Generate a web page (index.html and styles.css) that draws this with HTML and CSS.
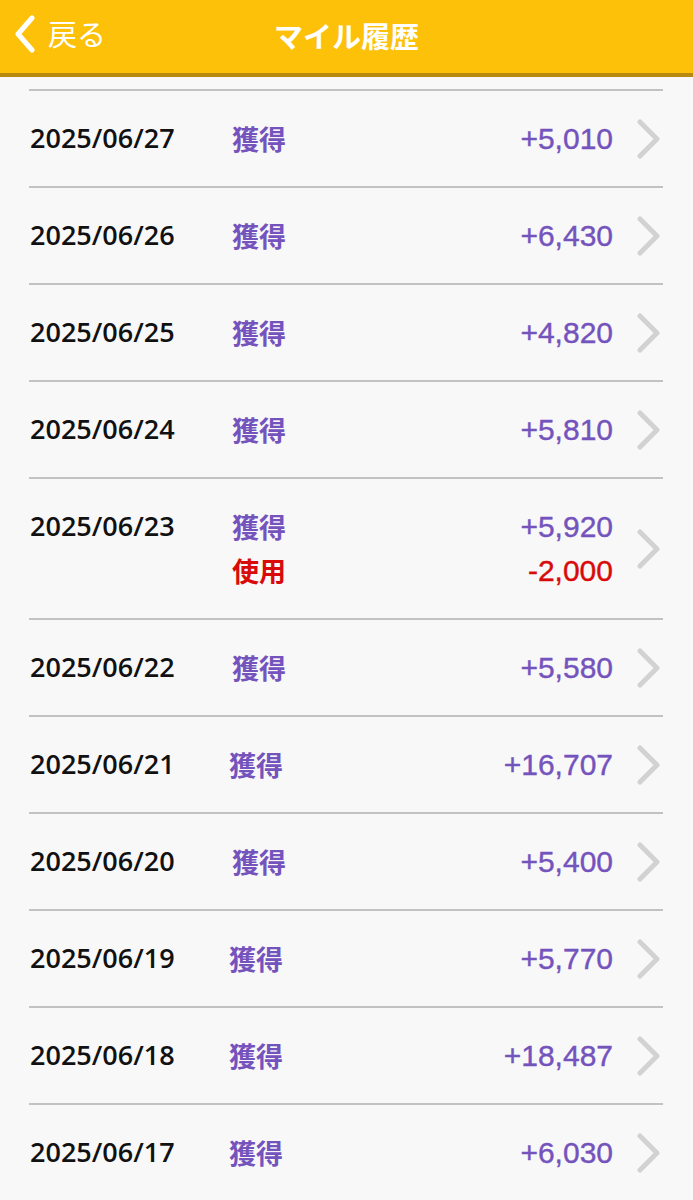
FILE: index.html
```html
<!DOCTYPE html>
<html lang="ja">
<head>
<meta charset="utf-8">
<title>マイル履歴</title>
<link rel="stylesheet" href="styles.css">
</head>
<body>
<header class="nav">
  <div class="back">
    <svg class="back-icon" width="24" height="38" viewBox="0 0 24 38"><path d="M19 3 L5 19 L19 35" fill="none" stroke="#fff" stroke-width="5" stroke-linecap="round" stroke-linejoin="round"/></svg>
    <span class="back-label">戻る</span>
  </div>
  <h1 class="title">マイル履歴</h1>
</header>
<main class="list">
  <div class="row">
    <div class="date">2025/06/27</div>
    <div class="types"><span class="earn">獲得</span></div>
    <div class="amounts"><span class="earn">+5,010</span></div>
    <svg class="chev" width="24" height="40" viewBox="0 0 24 40"><path d="M3 3 L20 20 L3 37" fill="none" stroke="#d2d2d2" stroke-width="5" stroke-linecap="round" stroke-linejoin="round"/></svg>
  </div>
  <div class="row">
    <div class="date">2025/06/26</div>
    <div class="types"><span class="earn">獲得</span></div>
    <div class="amounts"><span class="earn">+6,430</span></div>
    <svg class="chev" width="24" height="40" viewBox="0 0 24 40"><path d="M3 3 L20 20 L3 37" fill="none" stroke="#d2d2d2" stroke-width="5" stroke-linecap="round" stroke-linejoin="round"/></svg>
  </div>
  <div class="row">
    <div class="date">2025/06/25</div>
    <div class="types"><span class="earn">獲得</span></div>
    <div class="amounts"><span class="earn">+4,820</span></div>
    <svg class="chev" width="24" height="40" viewBox="0 0 24 40"><path d="M3 3 L20 20 L3 37" fill="none" stroke="#d2d2d2" stroke-width="5" stroke-linecap="round" stroke-linejoin="round"/></svg>
  </div>
  <div class="row">
    <div class="date">2025/06/24</div>
    <div class="types"><span class="earn">獲得</span></div>
    <div class="amounts"><span class="earn">+5,810</span></div>
    <svg class="chev" width="24" height="40" viewBox="0 0 24 40"><path d="M3 3 L20 20 L3 37" fill="none" stroke="#d2d2d2" stroke-width="5" stroke-linecap="round" stroke-linejoin="round"/></svg>
  </div>
  <div class="row">
    <div class="date">2025/06/23</div>
    <div class="types"><span class="earn">獲得</span><span class="use">使用</span></div>
    <div class="amounts"><span class="earn">+5,920</span><span class="use">-2,000</span></div>
    <svg class="chev" width="24" height="40" viewBox="0 0 24 40"><path d="M3 3 L20 20 L3 37" fill="none" stroke="#d2d2d2" stroke-width="5" stroke-linecap="round" stroke-linejoin="round"/></svg>
  </div>
  <div class="row">
    <div class="date">2025/06/22</div>
    <div class="types"><span class="earn">獲得</span></div>
    <div class="amounts"><span class="earn">+5,580</span></div>
    <svg class="chev" width="24" height="40" viewBox="0 0 24 40"><path d="M3 3 L20 20 L3 37" fill="none" stroke="#d2d2d2" stroke-width="5" stroke-linecap="round" stroke-linejoin="round"/></svg>
  </div>
  <div class="row">
    <div class="date">2025/06/21</div>
    <div class="types shift"><span class="earn">獲得</span></div>
    <div class="amounts"><span class="earn">+16,707</span></div>
    <svg class="chev" width="24" height="40" viewBox="0 0 24 40"><path d="M3 3 L20 20 L3 37" fill="none" stroke="#d2d2d2" stroke-width="5" stroke-linecap="round" stroke-linejoin="round"/></svg>
  </div>
  <div class="row">
    <div class="date">2025/06/20</div>
    <div class="types"><span class="earn">獲得</span></div>
    <div class="amounts"><span class="earn">+5,400</span></div>
    <svg class="chev" width="24" height="40" viewBox="0 0 24 40"><path d="M3 3 L20 20 L3 37" fill="none" stroke="#d2d2d2" stroke-width="5" stroke-linecap="round" stroke-linejoin="round"/></svg>
  </div>
  <div class="row">
    <div class="date">2025/06/19</div>
    <div class="types shift"><span class="earn">獲得</span></div>
    <div class="amounts"><span class="earn">+5,770</span></div>
    <svg class="chev" width="24" height="40" viewBox="0 0 24 40"><path d="M3 3 L20 20 L3 37" fill="none" stroke="#d2d2d2" stroke-width="5" stroke-linecap="round" stroke-linejoin="round"/></svg>
  </div>
  <div class="row">
    <div class="date">2025/06/18</div>
    <div class="types shift"><span class="earn">獲得</span></div>
    <div class="amounts"><span class="earn">+18,487</span></div>
    <svg class="chev" width="24" height="40" viewBox="0 0 24 40"><path d="M3 3 L20 20 L3 37" fill="none" stroke="#d2d2d2" stroke-width="5" stroke-linecap="round" stroke-linejoin="round"/></svg>
  </div>
  <div class="row">
    <div class="date">2025/06/17</div>
    <div class="types shift"><span class="earn">獲得</span></div>
    <div class="amounts"><span class="earn">+6,030</span></div>
    <svg class="chev" width="24" height="40" viewBox="0 0 24 40"><path d="M3 3 L20 20 L3 37" fill="none" stroke="#d2d2d2" stroke-width="5" stroke-linecap="round" stroke-linejoin="round"/></svg>
  </div>
</main>
</body>
</html>
```
FILE: styles.css
```css
* { box-sizing: border-box; }
html, body {
  margin: 0;
  padding: 0;
  background: #f8f8f8;
  font-family: "Liberation Sans", "Noto Sans CJK JP", sans-serif;
}
.nav {
  height: 77px;
  background: #fec10a;
  border-bottom: 4px solid #b8890f;
  display: flex;
  align-items: center;
  padding-bottom: 6px;
  position: relative;
}
.back {
  display: flex;
  align-items: center;
  gap: 11px;
  padding-left: 13px;
  color: #fff;
}
.back-label {
  font-family: "Noto Sans CJK JP", sans-serif;
  font-size: 29px;
  font-weight: 400;
  line-height: 1;
}
.title {
  position: absolute;
  left: 0;
  right: 0;
  top: 0;
  height: 70px;
  margin: 0;
  display: flex;
  align-items: center;
  justify-content: center;
  color: #fff;
  font-family: "Noto Sans CJK JP", sans-serif;
  font-size: 29px;
  font-weight: 700;
  line-height: 1;
  pointer-events: none;
}
.list {
  margin: 12px 30px 0 29px;
  border-bottom: 2px solid #c2c2c2;
}
.row {
  display: flex;
  align-items: flex-start;
  border-top: 2px solid #c2c2c2;
  padding: 25px 2px 25px 0;
}
.date {
  width: 203px;
  flex: none;
  font-family: "Open Sans", "Liberation Sans", sans-serif;
  font-size: 27px;
  font-weight: 600;
  color: #111;
  line-height: 44px;
  padding-left: 1px;
}
.types {
  display: flex;
  flex-direction: column;
  font-family: "Noto Sans CJK JP", sans-serif;
  font-size: 27px;
  font-weight: 700;
  line-height: 45px;
}
.types.shift { margin-left: -3px; }
.amounts {
  flex: 1;
  display: flex;
  flex-direction: column;
  align-items: flex-end;
  font-size: 30px;
  font-weight: 400;
  line-height: 45px;
  padding-right: 24px;
  -webkit-text-stroke: 0.4px currentColor;
}
.types .use, .amounts .use { line-height: 44px; }
.earn { color: #7553bd; }
.use { color: #d80a0a; }
.chev {
  flex: none;
  align-self: center;
}
```
